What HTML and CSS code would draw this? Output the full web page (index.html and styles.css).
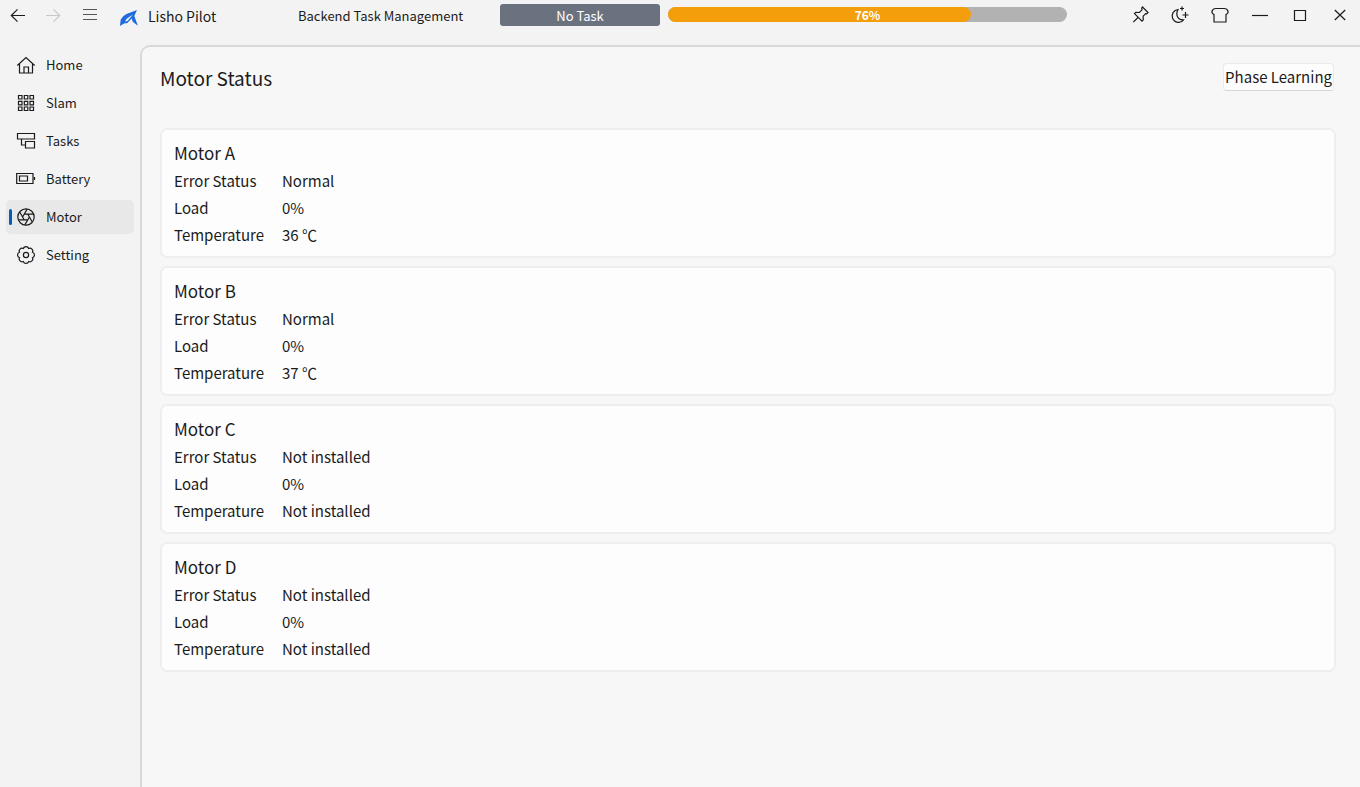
FILE: index.html
```html
<!DOCTYPE html>
<html lang="en">
<head>
<meta charset="utf-8">
<title>Lisho Pilot</title>
<link rel="stylesheet" href="styles.css">
</head>
<body>
<header class="titlebar">
  <button class="tool" aria-label="Back"><svg viewBox="0 0 20 20"><path d="M17 10.500H3.500M9.500 4.300 3.300 10.500l6.200 6.200"/></svg></button>
  <button class="tool" aria-label="Forward" disabled><svg viewBox="0 0 20 20"><path d="M3 10.500h13.500M10.500 4.300 16.700 10.500l-6.200 6.200"/></svg></button>
  <button class="tool tool-menu" aria-label="Menu"><svg viewBox="0 0 20 20"><path d="M3 4.500h14M3 9.500h14M3 14.500h14"/></svg></button>
  <svg class="logo" viewBox="0 0 20 20"><path d="M1 19 1.700 12.500Q4 8.500 7.500 7L18 3l-2.700 6 3.600 9.700-5.200-4-1-3.200-4.700 4.800H5.500Z" fill="#1f6bdc"/><path d="m6 14.500 1.600-2.800L14 7.500l-2.800 3.200-2.700 3.300Z" fill="#f3f3f3"/></svg>
  <span class="app-name">Lisho Pilot</span>
  <span class="task-label">Backend Task Management</span>
  <span class="task-badge">No Task</span>
  <div class="progress" role="progressbar" aria-label="Charge" aria-valuenow="76" aria-valuemin="0" aria-valuemax="100">
    <div class="progress-fill" style="width:76%"></div>
    <span class="progress-text">76%</span>
  </div>
  <div class="window-tools">
    <button class="tool" aria-label="Pin"><svg viewBox="0 0 20 20"><path d="m12.500 2 5.500 5.500-1.300 1.300-1-.2-2.600 2.600.2 3.600-1.300 1.300L4.500 8.600l1.300-1.300 3.600.2L12 4.900l-.3-1.700ZM8 12.500l-4.700 4.700"/></svg></button>
    <button class="tool" aria-label="Dark mode"><svg viewBox="0 0 20 20"><path d="M8 4.500C3.500 5 1.200 9.500 2.500 13c2 5.300 8.500 5.600 11 1.900-5 .6-8.500-4.300-5.500-10.400ZM12 1.500v4M10 3.500h4M15.500 7v6M12.500 10h6"/></svg></button>
    <button class="tool" aria-label="Theme"><svg viewBox="0 0 20 20"><path d="M6 3.500h8c4.500 0 5.300 4.700 2 6v7.500H4V9.500C.7 8.200 1.500 3.500 6 3.500Z"/></svg></button>
    <button class="tool" aria-label="Minimize"><svg viewBox="0 0 20 20"><path d="M2 10.500h16"/></svg></button>
    <button class="tool" aria-label="Maximize"><svg viewBox="0 0 20 20"><path d="M4.500 5.500h11v10h-11Z"/></svg></button>
    <button class="tool" aria-label="Close"><svg viewBox="0 0 20 20"><path d="m4.800 5 10.400 10M15.200 5 4.800 15"/></svg></button>
  </div>
</header>
<div class="workspace">
  <nav class="sidebar">
    <a class="nav-item" href="#home"><svg viewBox="0 0 20 20"><path d="M1.300 10.500 10 2.500l8.700 8M3.500 9v9h13V9M8 18v-6h4.500v6"/></svg>Home</a>
    <a class="nav-item" href="#slam"><svg viewBox="0 0 20 20"><path d="M2.500 2.500h3.500v3.500H2.500ZM8.300 2.500h3.500v3.500H8.300ZM14 2.500h3.500v3.500H14ZM2.500 8.300h3.500v3.500H2.500ZM8.300 8.300h3.500v3.500H8.300ZM14 8.300h3.500v3.500H14ZM2.500 14h3.500v3.500H2.500ZM8.300 14h3.500v3.500H8.300ZM14 14h3.500v3.500H14Z"/></svg>Slam</a>
    <a class="nav-item" href="#tasks"><svg viewBox="0 0 20 20"><path d="M1.500 2.500h17v5.500h-17ZM9.500 10.500h9v6.500h-9ZM5.500 8v6h4"/></svg>Tasks</a>
    <a class="nav-item" href="#battery"><svg viewBox="0 0 20 20"><path d="M.700 4.500h16.300v10H.700ZM3.500 7h8v5h-8ZM18.500 8v3"/></svg>Battery</a>
    <a class="nav-item nav-item-active" href="#motor" aria-current="page"><svg viewBox="0 0 20 20"><circle cx="10" cy="10" r="8.200"/><path d="M13.400 10 8.830 17.920M11.700 12.940 2.560 12.950M8.300 12.940 3.730 5.030M6.600 10l4.570-7.920M8.300 7.060l9.140-.01M11.700 7.060l4.570 7.910"/></svg>Motor</a>
    <a class="nav-item" href="#setting"><svg viewBox="0 0 20 20"><path d="M16.500 12.700A2.850 2.850 0 0 1 12.700 16.500 2.850 2.850 0 0 1 7.300 16.500 2.850 2.850 0 0 1 3.500 12.700 2.850 2.850 0 0 1 3.500 7.300 2.850 2.850 0 0 1 7.300 3.500 2.850 2.850 0 0 1 12.700 3.500 2.850 2.850 0 0 1 16.500 7.300 2.850 2.850 0 0 1 16.500 12.700Z"/><circle cx="10" cy="10" r="2.600"/></svg>Setting</a>
  </nav>
  <main class="panel">
    <div class="panel-head">
      <h1 class="panel-title">Motor Status</h1>
      <button class="phase-button">Phase Learning</button>
    </div>
    <section class="card">
      <h2 class="card-title">Motor A</h2>
      <dl class="facts"><dt>Error Status</dt><dd>Normal</dd><dt>Load</dt><dd>0%</dd><dt>Temperature</dt><dd>36 ℃</dd></dl>
    </section>
    <section class="card">
      <h2 class="card-title">Motor B</h2>
      <dl class="facts"><dt>Error Status</dt><dd>Normal</dd><dt>Load</dt><dd>0%</dd><dt>Temperature</dt><dd>37 ℃</dd></dl>
    </section>
    <section class="card">
      <h2 class="card-title">Motor C</h2>
      <dl class="facts"><dt>Error Status</dt><dd>Not installed</dd><dt>Load</dt><dd>0%</dd><dt>Temperature</dt><dd>Not installed</dd></dl>
    </section>
    <section class="card">
      <h2 class="card-title">Motor D</h2>
      <dl class="facts"><dt>Error Status</dt><dd>Not installed</dd><dt>Load</dt><dd>0%</dd><dt>Temperature</dt><dd>Not installed</dd></dl>
    </section>
  </main>
</div>
</body>
</html>
```
FILE: styles.css
```css
* { box-sizing: border-box; }
body {
  margin: 0;
  min-height: 100vh;
  display: flex;
  flex-direction: column;
  background: #f3f3f3;
  color: #1b1b1b;
  font: 13px/22px "Noto Sans CJK SC", "Noto Sans", sans-serif;
}
svg { width: 20px; height: 20px; flex: none; fill: none; stroke: currentColor; stroke-width: 1.2; }
button { font: inherit; color: inherit; padding: 0; border: 0; background: none; }
.titlebar { display: flex; align-items: flex-start; height: 45px; }
.tool { width: 40px; height: 30px; display: flex; align-items: center; justify-content: center; }
.titlebar > .tool { width: 35px; }
.titlebar > .tool-menu { width: 40px; color: #555; }
.tool:disabled { color: #c8c8c8; }
.logo { margin: 7px 9px 0; stroke: none; }
.app-name { width: 150px; margin-top: 5px; font-size: 14px; }
.task-label { width: 202px; margin-top: 5px; }
.task-badge { width: 160px; margin: 4px 8px 0 0; padding-top: 1px; line-height: 21px; border-radius: 3px; background: #6b727f; color: #fff; text-align: center; }
.progress { flex: 0 1 399px; display: grid; height: 15px; margin-top: 7px; border-radius: 8px; background: #b2b2b2; }
.progress-fill, .progress-text { grid-area: 1 / 1; }
.progress-fill { border-radius: 8px; background: #f59e0b; }
.progress-text { line-height: 15px; text-align: center; font-size: 12px; font-weight: 700; color: #fff; }
.window-tools { display: flex; margin-left: auto; }
.workspace { flex: 1; display: flex; }
.sidebar { width: 140px; padding: 3px 6px; display: flex; flex-direction: column; gap: 4px; }
.nav-item { height: 34px; display: flex; align-items: center; gap: 10px; padding-left: 10px; border-radius: 5px; color: inherit; text-decoration: none; position: relative; }
.nav-item-active { background: #e8e8e8; }
.nav-item-active::before { content: ""; position: absolute; left: 3px; top: 9px; width: 3px; height: 16px; border-radius: 2px; background: #005fb8; }
.panel { flex: 1; display: flex; flex-direction: column; gap: 8px; padding: 16px 24px 16px 18px; border: 2px solid #d8d8d8; border-width: 2px 0 0 2px; border-radius: 10px 0 0 0; background: #f7f7f7; }
.panel-head { display: flex; justify-content: space-between; align-items: flex-start; margin-bottom: 27px; }
.panel-title { margin: 0; font-size: 19px; line-height: 30px; font-weight: 400; }
.phase-button { height: 28px; padding: 0 1px; margin-right: 2px; border: 1px solid #eaeaea; border-bottom-color: #d6d6d6; border-radius: 4px; background: #fdfdfd; font-size: 15px; line-height: 26px; }
.card { padding: 9px 12px 8px; border: 2px solid #eee; border-radius: 7px; background: #fdfdfd; }
.card-title { margin: 0; font-size: 17px; line-height: 28px; font-weight: 400; }
.facts { display: grid; grid-template-columns: 108px 1fr; margin: 0; font-size: 15px; line-height: 27px; }
.facts dd { margin: 0; }
```
